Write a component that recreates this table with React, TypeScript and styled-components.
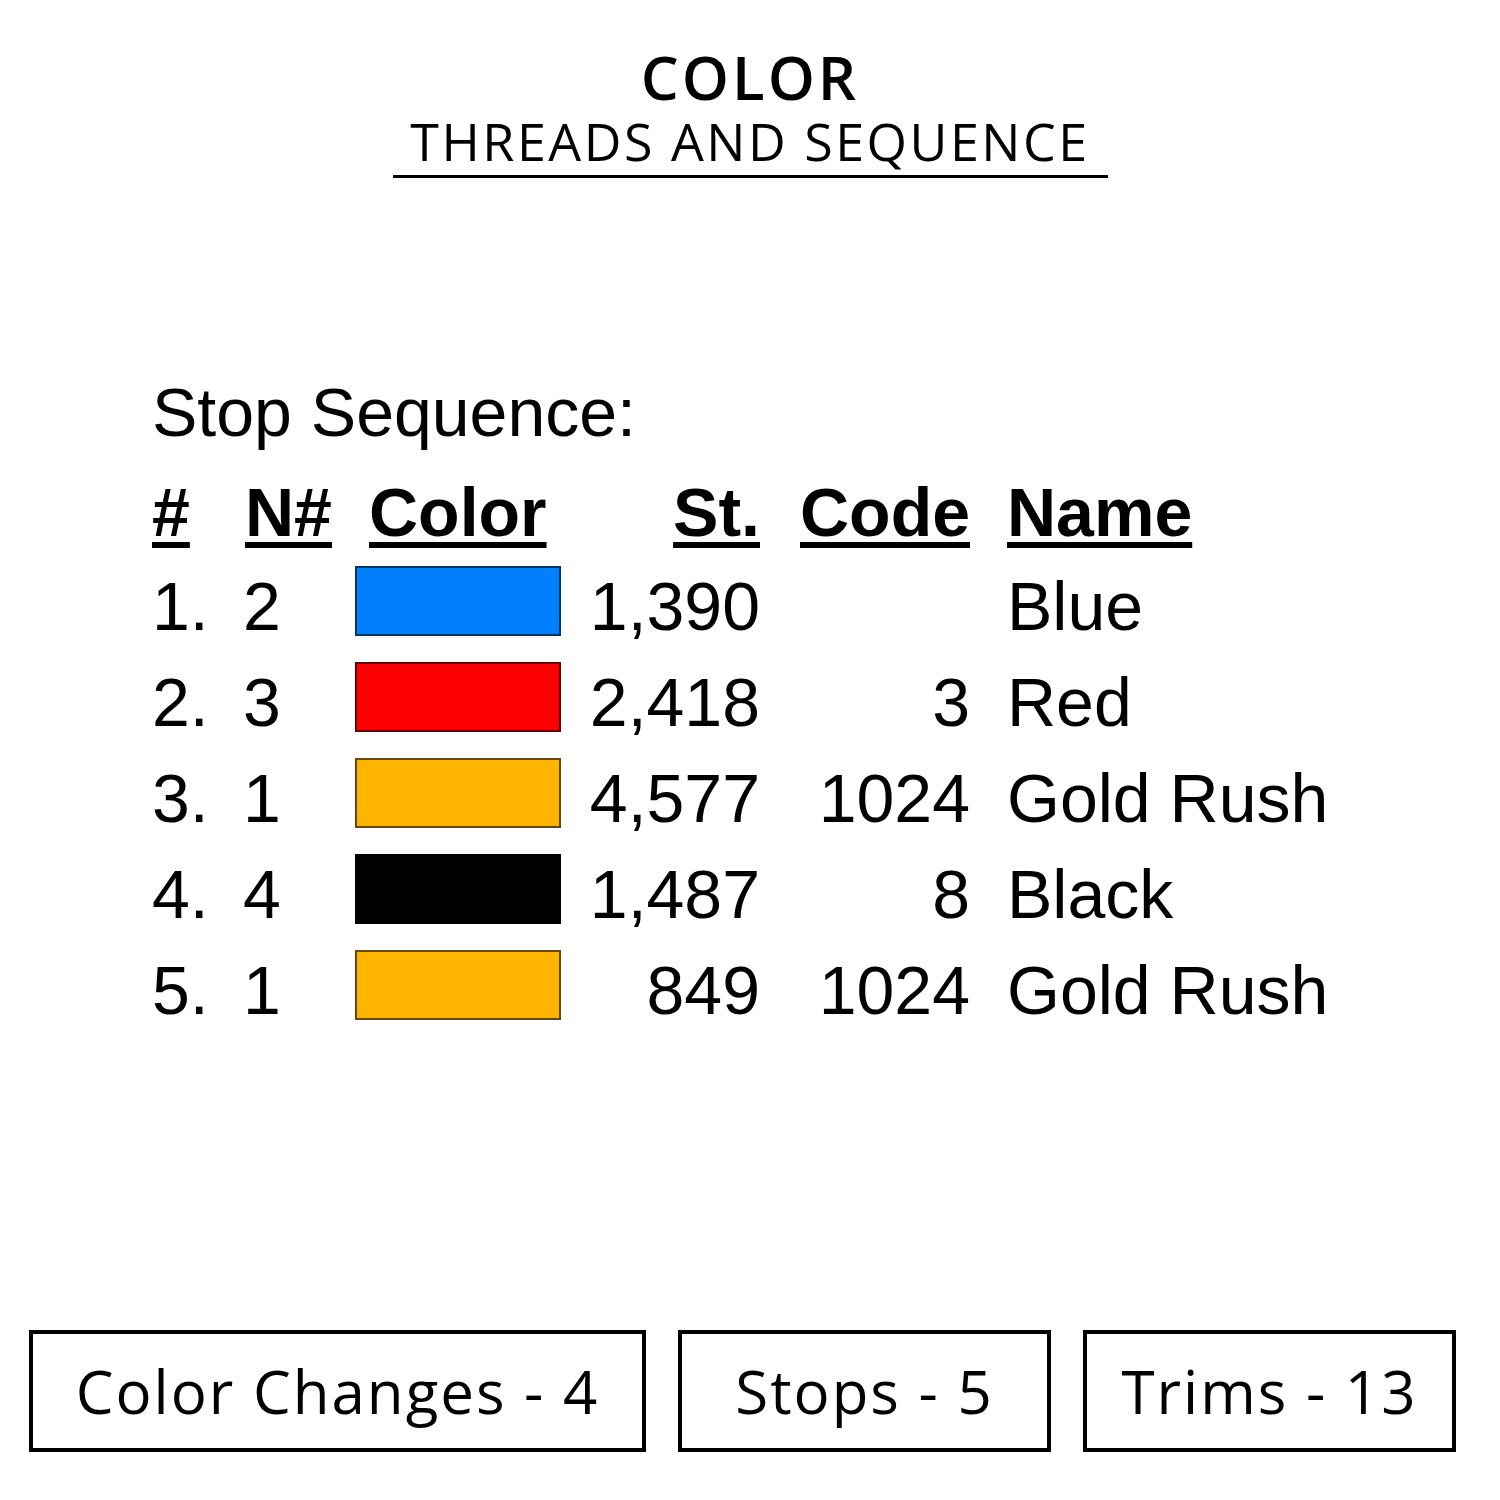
import React from 'react';
import styled, {createGlobalStyle} from 'styled-components';

const GlobalStyle = createGlobalStyle`
  html, body {
    margin: 0;
    padding: 0;
    background: #ffffff;
  }
`;

const Page = styled.div`
  width: 1500px;
  height: 1500px;
  display: flex;
  flex-direction: column;
  background: #ffffff;
  color: #000000;
  box-sizing: border-box;
`;

const Heading = styled.header`
  display: flex;
  flex-direction: column;
  align-items: center;
  margin-top: 47px;
`;

const HeadingTitle = styled.h1`
  margin: 0 0 6px;
  font-family: 'Open Sans', 'DejaVu Sans', sans-serif;
  font-weight: 600;
  font-size: 60px;
  line-height: 60px;
  letter-spacing: 3px;
`;

const HeadingSub = styled.h2`
  margin: 0;
  width: 715px;
  text-align: center;
  font-family: 'Open Sans', 'DejaVu Sans', sans-serif;
  font-weight: 400;
  font-size: 52px;
  line-height: 56px;
  letter-spacing: 2.5px;
  border-bottom: 3px solid #000000;
  padding-bottom: 6px;
`;

const Sheet = styled.section`
  margin-top: 196px;
  padding-left: 152px;
  font-family: 'Liberation Sans', Arial, sans-serif;
`;

const SheetTitle = styled.div`
  font-size: 68px;
  line-height: 76px;
  margin-bottom: 14px;
`;

const Table = styled.div`
  display: grid;
  grid-template-columns: 91px 112px 220px 185px 210px auto;
  grid-auto-rows: 96px;
  align-items: center;
`;

const HeadCell = styled.div<{$right?: boolean; $inset?: number}>`
  font-size: 68px;
  font-weight: 700;
  line-height: 1;
  text-align: ${p => (p.$right ? 'right' : 'left')};
  padding-left: ${p => p.$inset ?? 0}px;
  align-self: end;
  padding-bottom: 14px;

  span {
    text-decoration: underline;
    text-decoration-thickness: 6px;
    text-underline-offset: 6px;
  }
`;

const Cell = styled.div<{$right?: boolean; $inset?: number}>`
  font-size: 68px;
  line-height: 1;
  text-align: ${p => (p.$right ? 'right' : 'left')};
  padding-left: ${p => p.$inset ?? 0}px;
  white-space: nowrap;
  margin-top: -4px;
`;

const Swatch = styled.div<{$fill: string}>`
  width: 206px;
  height: 70px;
  box-sizing: border-box;
  background: ${p => p.$fill};
  border: 2px solid rgba(0, 0, 0, 0.6);
  margin-top: -14px;
`;

const Footer = styled.footer`
  margin-top: auto;
  margin-bottom: 48px;
  padding-left: 29px;
  display: flex;
  gap: 32px;
`;

const StatBox = styled.div<{$width: number}>`
  width: ${p => p.$width}px;
  height: 122px;
  box-sizing: border-box;
  border: 4px solid #000000;
  display: flex;
  align-items: center;
  justify-content: center;
  font-family: 'Open Sans', 'DejaVu Sans', sans-serif;
  font-size: 60px;
  font-weight: 400;
  letter-spacing: 2px;
`;

const rows = [
  {n: '1.', needle: '2', fill: '#0080ff', st: '1,390', code: '', name: 'Blue'},
  {n: '2.', needle: '3', fill: '#ff0000', st: '2,418', code: '3', name: 'Red'},
  {n: '3.', needle: '1', fill: '#ffb400', st: '4,577', code: '1024', name: 'Gold Rush'},
  {n: '4.', needle: '4', fill: '#000000', st: '1,487', code: '8', name: 'Black'},
  {n: '5.', needle: '1', fill: '#ffb400', st: '849', code: '1024', name: 'Gold Rush'},
];

const stats = [
  {label: 'Color Changes - 4', width: 617},
  {label: 'Stops - 5', width: 373},
  {label: 'Trims - 13', width: 373},
];

const App: React.FC = () => {
  return (
    <Page>
      <GlobalStyle />
      <Heading>
        <HeadingTitle>COLOR</HeadingTitle>
        <HeadingSub>THREADS AND SEQUENCE</HeadingSub>
      </Heading>
      <Sheet>
        <SheetTitle>Stop Sequence:</SheetTitle>
        <Table>
          <HeadCell><span>#</span></HeadCell>
          <HeadCell $inset={2}><span>N#</span></HeadCell>
          <HeadCell $inset={14}><span>Color</span></HeadCell>
          <HeadCell $right><span>St.</span></HeadCell>
          <HeadCell $right><span>Code</span></HeadCell>
          <HeadCell $inset={37}><span>Name</span></HeadCell>
          {rows.map((r, i) => (
            <React.Fragment key={i}>
              <Cell>{r.n}</Cell>
              <Cell>{r.needle}</Cell>
              <Swatch $fill={r.fill} />
              <Cell $right>{r.st}</Cell>
              <Cell $right>{r.code}</Cell>
              <Cell $inset={37}>{r.name}</Cell>
            </React.Fragment>
          ))}
        </Table>
      </Sheet>
      <Footer>
        {stats.map(s => (
          <StatBox key={s.label} $width={s.width}>{s.label}</StatBox>
        ))}
      </Footer>
    </Page>
  );
};

export default App;
